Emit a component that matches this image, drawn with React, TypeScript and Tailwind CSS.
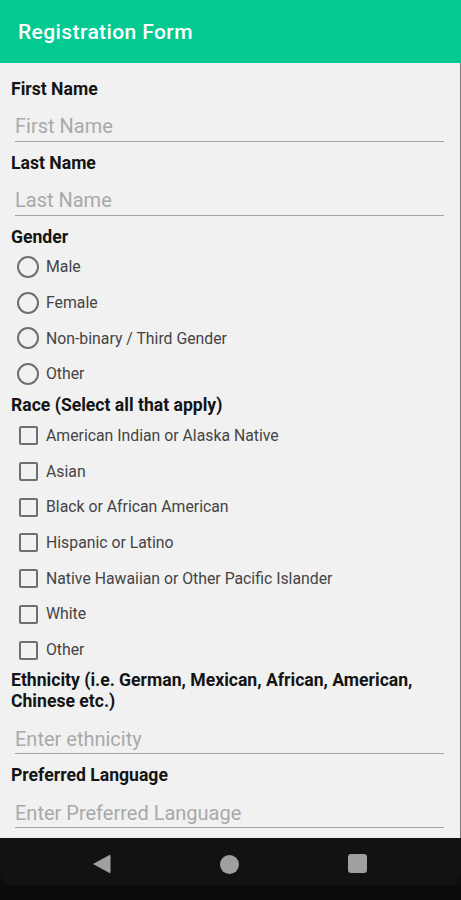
import React from "react";

const font = { fontFamily: "Roboto, 'Noto Sans', sans-serif" };

function Label({ children }: { children: React.ReactNode }) {
  return (
    <div className="text-[17.6px] leading-[21px] font-bold text-[#141414]">{children}</div>
  );
}

function Field({ placeholder }: { placeholder: string }) {
  return (
    <div className="ml-[4px] mr-[16px]">
      <input
        placeholder={placeholder}
        className="block w-full h-[42px] bg-transparent border-b-[1.5px] border-[#a3a3a3] pt-[12.5px] text-[20px] text-[#222] outline-none placeholder:text-[#a9a9a9]"
        style={font}
      />
    </div>
  );
}

function Radio({ label }: { label: string }) {
  return (
    <div className="flex items-center h-[35.7px] pl-[6px]">
      <span className="w-[22px] h-[22px] rounded-full border-2 border-[#6f6f6f] shrink-0" />
      <span className="ml-[7px] text-[15.8px] text-[#444]">{label}</span>
    </div>
  );
}

function Check({ label }: { label: string }) {
  return (
    <div className="flex items-center h-[35.7px] pl-[7.5px]">
      <span className="w-[19px] h-[19px] rounded-[2px] border-2 border-[#6f6f6f] shrink-0" />
      <span className="ml-[8.5px] text-[15.8px] text-[#444]">{label}</span>
    </div>
  );
}

export default function App() {
  return (
    <div className="w-[461px] h-[900px] flex flex-col bg-[#0e0e0e] overflow-hidden" style={font}>
      <div className="h-[63px] shrink-0 bg-[#02ca90] flex items-center px-[18px] pt-[2px]">
        <span className="text-[21px] font-medium text-white tracking-[0.4px]">Registration Form</span>
      </div>
      <div className="flex-1 bg-[#f1f1f1] pl-[11px] pt-[15.5px] border-r border-[#7a7a7a]">
        <Label>First Name</Label>
        <Field placeholder="First Name" />
        <div className="mt-[11px]">
          <Label>Last Name</Label>
        </div>
        <Field placeholder="Last Name" />
        <div className="mt-[11px]">
          <Label>Gender</Label>
        </div>
        <div className="mt-[1.7px]">
          <Radio label="Male" />
          <Radio label="Female" />
          <Radio label="Non-binary / Third Gender" />
          <Radio label="Other" />
        </div>
        <div className="mt-[3.5px]">
          <Label>Race (Select all that apply)</Label>
        </div>
        <div className="mt-[1.6px]">
          <Check label="American Indian or Alaska Native" />
          <Check label="Asian" />
          <Check label="Black or African American" />
          <Check label="Hispanic or Latino" />
          <Check label="Native Hawaiian or Other Pacific Islander" />
          <Check label="White" />
          <Check label="Other" />
        </div>
        <div className="mt-[2.5px] pr-[30px]">
          <Label>Ethnicity (i.e. German, Mexican, African, American, Chinese etc.)</Label>
        </div>
        <Field placeholder="Enter ethnicity" />
        <div className="mt-[10.5px]">
          <Label>Preferred Language</Label>
        </div>
        <Field placeholder="Enter Preferred Language" />
      </div>
      <div className="h-[48px] shrink-0 bg-[#121212] rounded-b-[14px] flex items-center relative">
        <svg className="absolute left-[92px] top-[16px]" width="19" height="20" viewBox="0 0 19 20">
          <path d="M1 10 L17.5 1 Q18.5 0.6 18.5 2 L18.5 18 Q18.5 19.4 17.5 19 Z" fill="#a0a0a0" />
        </svg>
        <span className="absolute left-[220px] top-[17px] w-[19px] h-[19px] rounded-full bg-[#a0a0a0]" />
        <span className="absolute left-[348px] top-[16px] w-[19px] h-[19px] rounded-[3px] bg-[#a0a0a0]" />
      </div>
      <div className="h-[14px] shrink-0 bg-[#0b0b0b]" />
    </div>
  );
}
